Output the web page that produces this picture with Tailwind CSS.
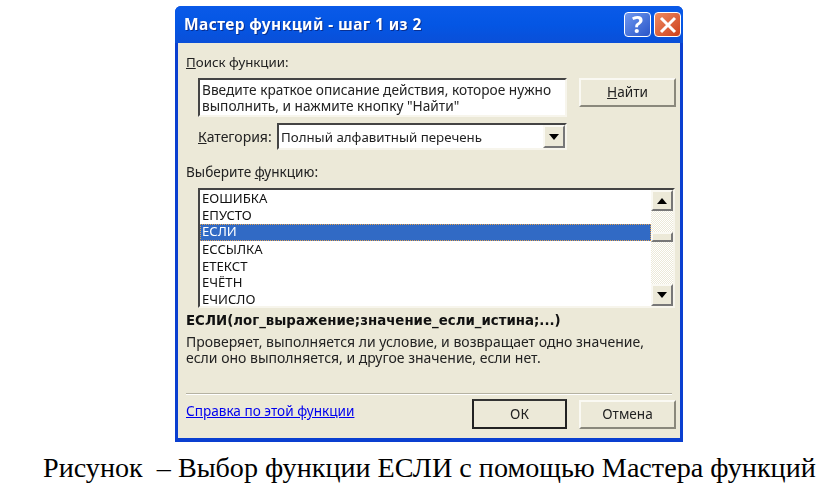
<!DOCTYPE html>
<html>

<head>
    <meta charset="UTF-8">
    <title>Мастер функций</title>
    <script src="https://cdn.jsdelivr.net/npm/@tailwindcss/browser@4"></script>
</head>

<body class="bg-white w-[839px] h-[488px] overflow-hidden">
    <div class="pt-[6px] pl-[175px]">
        <!-- окно -->
        <div class="w-[508px] h-[436px] rounded-t-[6px] bg-[#0a3fd0] px-[3px] pb-[4px] font-['Noto_Sans',sans-serif] text-[13.6px] text-[#222] blur-[0.4px]">
            <div class="h-[37px] -mx-[3px] rounded-t-[6px] bg-gradient-to-b from-[#0a5ae8] via-[#0456e4] to-[#0a4fd8] flex items-center pl-[9px] pr-[2px]">
                <span class="font-bold text-white text-[15.5px] tracking-[0.4px] [text-shadow:1px_1px_#0a2f90] flex-1">Мастер функций - шаг 1 из 2</span>
                <div class="w-[27px] h-[25px] rounded-[4px] border border-white bg-gradient-to-br from-[#6f97ef] to-[#2a55c8] text-white text-[23px] font-bold leading-[23px] text-center">?</div>
                <div class="ml-[3px] w-[27px] h-[25px] rounded-[4px] border border-white bg-gradient-to-br from-[#ee8a60] to-[#cc3d18] flex items-center justify-center">
                    <svg width="18" height="18" viewBox="0 0 18 18"><path d="M2 2 L16 16 M16 2 L2 16" stroke="#fff" stroke-width="3"/></svg>
                </div>
            </div>
            <div class="h-[395px] bg-[#ece9d8] flex flex-col">
                <div class="h-[17px] mt-[11px] ml-[8px] leading-[17px] text-[13.3px]"><span class="underline">П</span>оиск функции:</div>
                <div class="flex mt-[7px] ml-[20px]">
                    <div class="w-[369px] h-[39px] bg-white border-2 border-t-[#444] border-l-[#444] border-r-[#f7f5ec] border-b-[#f7f5ec] pl-[2px] pt-[2px] leading-[16px] text-[13.7px]">Введите краткое описание действия, которое нужно<br>выполнить, и нажмите кнопку "Найти"</div>
                    <div class="ml-[12px] w-[97px] h-[29px] bg-[#ece9d8] border-2 border-t-[#faf9f3] border-l-[#faf9f3] border-r-[#8a887c] border-b-[#8a887c] flex items-center justify-center"><span><span class="underline">Н</span>айти</span></div>
                </div>
                <div class="flex items-center mt-[6px] ml-[20px] h-[27px]">
                    <div class="w-[79px] text-[14px]"><span class="underline">К</span>атегория:</div>
                    <div class="w-[290px] h-[27px] bg-white border-2 border-t-[#444] border-l-[#444] border-r-[#f7f5ec] border-b-[#f7f5ec] flex">
                        <div class="flex-1 pl-[2px] leading-[24px] text-[13.3px]">Полный алфавитный перечень</div>
                        <div class="w-[22px] h-[23px] bg-[#ece9d8] border-2 border-t-[#faf9f3] border-l-[#faf9f3] border-r-[#777] border-b-[#777] flex items-center justify-center">
                            <svg width="10" height="6" viewBox="0 0 10 6"><path d="M0 0 H10 L5 6 Z" fill="#000"/></svg>
                        </div>
                    </div>
                </div>
                <div class="h-[17px] mt-[13px] ml-[8px] leading-[17px]">Выберите <span class="underline">ф</span>ункцию:</div>
                <div class="mt-[8px] ml-[20px] w-[477px] h-[120px] bg-white border-2 border-t-[#444] border-l-[#444] border-r-[#f7f5ec] border-b-[#f7f5ec] flex">
                    <div class="flex-1 leading-[16.6px] text-[13.1px] text-[#111]">
                        <div class="pl-[2px] h-[16.6px]">ЕОШИБКА</div>
                        <div class="pl-[2px] h-[16.6px]">ЕПУСТО</div>
                        <div class="pl-[2px] h-[17px] mt-[1px] bg-[#316ac5] text-white leading-[15px] outline-1 -outline-offset-1 outline-dotted outline-[#e0a050]">ЕСЛИ</div>
                        <div class="pl-[2px] h-[16.6px]">ЕССЫЛКА</div>
                        <div class="pl-[2px] h-[16.6px]">ЕТЕКСТ</div>
                        <div class="pl-[2px] h-[16.6px]">ЕЧЁТН</div>
                        <div class="pl-[2px] h-[16.6px]">ЕЧИСЛО</div>
                    </div>
                    <div class="w-[22px] flex flex-col bg-[conic-gradient(#fff_25%,#ece9d8_0_50%,#fff_0_75%,#ece9d8_0)] bg-[length:2px_2px]">
                        <div class="h-[21px] bg-[#ece9d8] border-2 border-t-[#faf9f3] border-l-[#faf9f3] border-r-[#777] border-b-[#777] flex items-center justify-center">
                            <svg width="10" height="6" viewBox="0 0 10 6"><path d="M0 6 H10 L5 0 Z" fill="#000"/></svg>
                        </div>
                        <div class="h-[10px] mt-[21px] bg-[#ece9d8] border-2 border-t-[#faf9f3] border-l-[#faf9f3] border-r-[#777] border-b-[#777]"></div>
                        <div class="h-[22px] mt-auto bg-[#ece9d8] border-2 border-t-[#faf9f3] border-l-[#faf9f3] border-r-[#777] border-b-[#777] flex items-center justify-center">
                            <svg width="10" height="6" viewBox="0 0 10 6"><path d="M0 0 H10 L5 6 Z" fill="#000"/></svg>
                        </div>
                    </div>
                </div>
                <div class="mt-[4px] ml-[8px] h-[18px] font-['DejaVu_Sans',sans-serif] font-bold text-[13.35px] leading-[18px] text-[#111]">ЕСЛИ(лог_выражение;значение_если_истина;...)</div>
                <div class="mt-[4px] ml-[8px] leading-[16px] text-[14px]">Проверяет, выполняется ли условие, и возвращает одно значение,<br>если оно выполняется, и другое значение, если нет.</div>
                <div class="mt-[27px] mx-[8px] h-[2px] border-t border-[#b5b2a2] border-b-[#fff] border-b"></div>
                <div class="flex items-center mt-[4px] ml-[8px]">
                    <a class="w-[286px] text-[#0000ee] underline -mt-[5px]">Справка по этой функции</a>
                    <div class="w-[95px] h-[30px] bg-[#ece9d8] border-2 border-[#222] border-t-[#333] flex items-center justify-center">ОК</div>
                    <div class="ml-[12px] w-[97px] h-[29px] bg-[#ece9d8] border-2 border-t-[#faf9f3] border-l-[#faf9f3] border-r-[#8a887c] border-b-[#8a887c] flex items-center justify-center">Отмена</div>
                </div>
            </div>
        </div>
    </div>
    <p class="mt-[9px] ml-[43px] font-['Liberation_Serif',serif] text-[28.15px] leading-[34px] text-black whitespace-pre">Рисунок  – Выбор функции ЕСЛИ с помощью Мастера функций</p>
</body>

</html>
